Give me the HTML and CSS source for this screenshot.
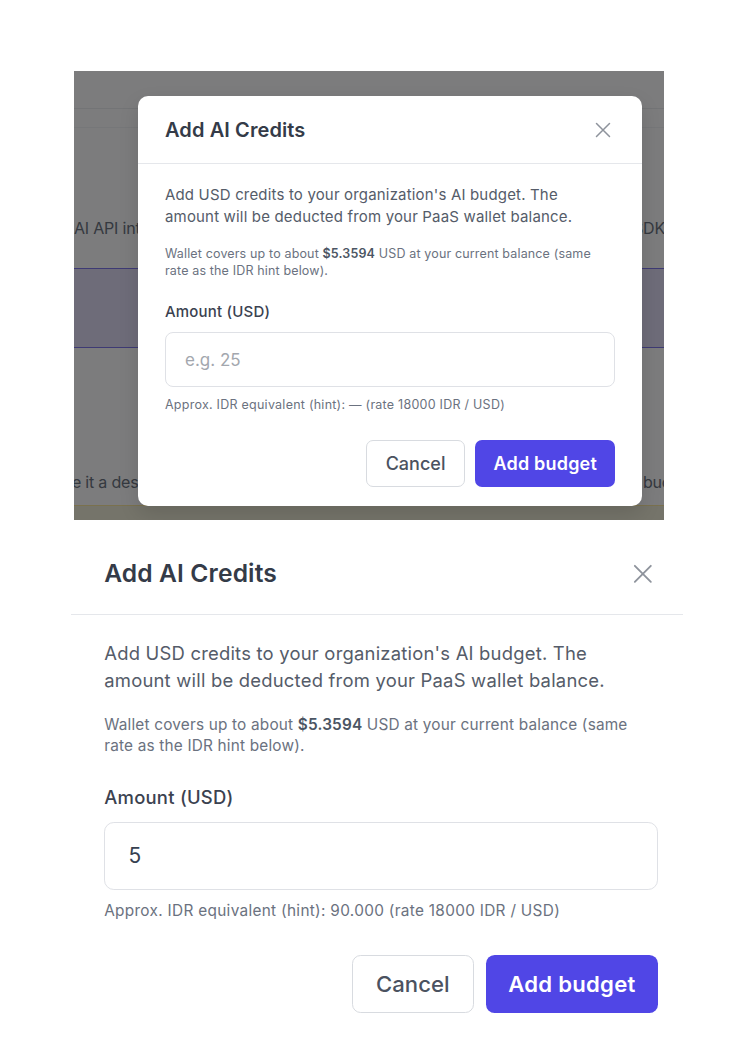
FILE: index.html
```html
<!DOCTYPE html>
<html>
<head>
    <title>Add AI Credits</title>
    <meta name="viewport" content="width=device-width, initial-scale=1">
    <link rel="stylesheet" href="styles.css">
</head>
<body>
    <!-- dialog opened over the AI settings page -->
    <div class="preview">
        <div class="app">
            <div class="topbar"></div>
            <div class="subbar"></div>
            <div class="row lead">
                <span>AI API integrations for every project</span>
                <span class="edge-right">SDK</span>
            </div>
            <div class="band"></div>
            <div class="row hint-row">
                <span class="cut-giv">Give it a description so your team knows</span>
                <span class="tail">budget</span>
            </div>
            <div class="strip"></div>
        </div>
        <div class="overlay"></div>
        <div class="modal modal-floating">
            <div class="modal-header">
                <h3>Add AI Credits</h3>
                <button class="close-button" aria-label="Close">
                    <svg width="16" height="16" viewBox="0 0 16 16"><path d="M1.5 1.5L14.5 14.5M14.5 1.5L1.5 14.5" stroke="currentColor" stroke-width="1.5" stroke-linecap="round" fill="none"/></svg>
                </button>
            </div>
            <div class="modal-body">
                <p class="intro">Add USD credits to your organization's AI budget. The amount will be deducted from your PaaS wallet balance.</p>
                <p class="note">Wallet covers up to about <strong>$5.3594</strong> USD at your current balance (same rate as the IDR hint below).</p>
                <label class="field-label" for="amount">Amount (USD)</label>
                <input type="text" id="amount" class="amount-input" placeholder="e.g. 25">
                <p class="note hint">Approx. IDR equivalent (hint): — (rate 18000 IDR / USD)</p>
                <div class="modal-footer">
                    <button class="btn btn-cancel">Cancel</button>
                    <button class="btn btn-primary">Add budget</button>
                </div>
            </div>
        </div>
    </div>

    <!-- same dialog, larger, with an amount filled in -->
    <div class="detail">
        <div class="modal modal-large">
            <div class="modal-header">
                <h3>Add AI Credits</h3>
                <button class="close-button" aria-label="Close">
                    <svg width="16" height="16" viewBox="0 0 16 16"><path d="M1.5 1.5L14.5 14.5M14.5 1.5L1.5 14.5" stroke="currentColor" stroke-width="1.5" stroke-linecap="round" fill="none"/></svg>
                </button>
            </div>
            <div class="modal-body">
                <p class="intro">Add USD credits to your organization's AI budget. The amount will be deducted from your PaaS wallet balance.</p>
                <p class="note">Wallet covers up to about <strong>$5.3594</strong> USD at your current balance (same rate as the IDR hint below).</p>
                <label class="field-label" for="amount2">Amount (USD)</label>
                <input type="text" id="amount2" class="amount-input" placeholder="e.g. 25" value="5">
                <p class="note hint">Approx. IDR equivalent (hint): 90.000 (rate 18000 IDR / USD)</p>
                <div class="modal-footer">
                    <button class="btn btn-cancel">Cancel</button>
                    <button class="btn btn-primary">Add budget</button>
                </div>
            </div>
        </div>
    </div>
</body>
</html>
```

FILE: styles.css
```css
* {
    box-sizing: border-box;
}

body {
    margin: 0;
    padding: 71px 0 0 0;
    background-color: #fff;
    font-family: Inter, "Noto Sans", sans-serif;
    color: #374151;
}

/* page behind the dialog */
.preview {
    position: relative;
    width: 590px;
    height: 449px;
    margin-left: 74px;
    overflow: hidden;
}

.app {
    height: 100%;
    background-color: #f8f9fb;
    overflow: hidden;
}

.topbar {
    height: 38px;
    border-bottom: 1px solid #e6e8ec;
}

.subbar {
    height: 19px;
    border-bottom: 1px solid #eceef2;
}

.row {
    display: flex;
    justify-content: space-between;
    font-size: 16px;
    line-height: 24px;
    color: #6b7280;
    white-space: nowrap;
    letter-spacing: -0.2px;
}

.lead {
    margin-top: 88px;
}

/* only the tail of the word peeks out past the dialog */
.edge-right {
    width: 23px;
    margin-right: -1px;
    overflow: hidden;
    direction: rtl;
}

.band {
    height: 80px;
    margin-top: 28px;
    background-color: #ddd9f2;
    border-top: 1px solid #7c74e8;
    border-bottom: 1px solid #7c74e8;
}

.hint-row {
    margin-top: 122px;
}

.cut-giv {
    margin-left: -26px;
}

.tail {
    width: 21px;
    overflow: hidden;
}

.strip {
    height: 16px;
    margin-top: 11px;
    background-color: #ebe9d5;
    border-top: 1px solid #f4e29c;
}

.overlay {
    position: absolute;
    inset: 0;
    background-color: rgba(0, 0, 0, 0.5);
}

/* dialog */
.modal {
    width: 504px;
    background-color: #fff;
    border-radius: 10px;
}

.modal-floating {
    position: absolute;
    left: 64px;
    top: 25px;
    box-shadow: 0 8px 20px rgba(0, 0, 0, 0.12);
}

.modal-header {
    display: flex;
    align-items: center;
    justify-content: space-between;
    padding: 21px 31px 20px 27px;
    border-bottom: 1px solid #e5e7eb;
}

.modal-header h3 {
    margin: 0;
    font-size: 20px;
    line-height: 26px;
    font-weight: 600;
    color: #343b48;
    letter-spacing: 0.1px;
}

.close-button {
    display: flex;
    padding: 0;
    border: none;
    background: none;
    color: #8e939c;
    cursor: pointer;
}

.modal-body {
    padding: 20px 27px 19px 27px;
}

.intro {
    margin: 0;
    font-size: 15px;
    line-height: 22px;
    color: #555c69;
    letter-spacing: 0.17px;
}

.note {
    margin: 17px 0 0 0;
    font-size: 12.5px;
    line-height: 17px;
    color: #6b7280;
    letter-spacing: 0.15px;
}

.note strong {
    font-weight: 600;
    color: #4b5563;
}

.field-label {
    display: block;
    margin-top: 22px;
    font-size: 15px;
    line-height: 22px;
    font-weight: 500;
    color: #3b4250;
    letter-spacing: 0.2px;
}

.amount-input {
    display: block;
    width: 100%;
    height: 55px;
    margin-top: 9px;
    padding: 0 19px;
    border: 1px solid #dfe1e6;
    border-radius: 8px;
    background-color: #fff;
    font-family: Inter, "Noto Sans", sans-serif;
    font-size: 17px;
    color: #374151;
    outline: none;
}

.amount-input::placeholder {
    color: #a3a7ae;
}

.hint {
    margin-top: 9px;
    letter-spacing: 0.25px;
}

.modal-footer {
    display: flex;
    justify-content: flex-end;
    gap: 10px;
    margin-top: 27px;
}

.btn {
    height: 47px;
    padding: 0 19px;
    border-radius: 7px;
    font-family: Inter, "Noto Sans", sans-serif;
    font-size: 18px;
    cursor: pointer;
}

.btn-cancel {
    background-color: #fff;
    border: 1px solid #d8dbe0;
    color: #4b5260;
    font-weight: 500;
}

.btn-primary {
    padding: 0 18px;
    background-color: #5046e6;
    border: none;
    color: #fff;
    font-weight: 600;
    letter-spacing: 0.2px;
}

/* enlarged copy below */
.detail {
    width: 612px;
    margin: 12px 0 0 71px;
    overflow: hidden;
}

.modal-large {
    zoom: 1.23;
}
```
